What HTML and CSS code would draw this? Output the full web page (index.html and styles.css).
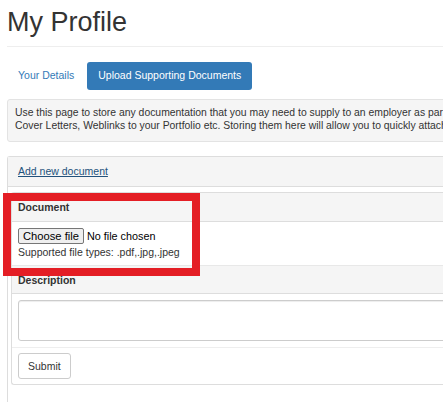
FILE: index.html
```html
<!DOCTYPE html>
<html>
<head>
<meta charset="utf-8">
<link rel="stylesheet" href="styles.css">
</head>
<body>
<div class="page">
  <div class="page-header"><h1>My Profile</h1></div>
  <ul class="nav">
    <li><a class="tab">Your Details</a></li>
    <li><a class="tab active">Upload Supporting Documents</a></li>
  </ul>
  <div class="well">Use this page to store any documentation that you may need to supply to an employer as part of an application, such as CVs,<br>Cover Letters, Weblinks to your Portfolio etc. Storing them here will allow you to quickly attach them to your applications.</div>
  <div class="panel outer">
    <div class="panel-heading"><a class="link" href="#">Add new document</a></div>
    <div class="outer-body">
      <div class="panel inner">
        <div class="panel-heading strong">Document</div>
        <div class="panel-body file-body">
          <div class="file-row"><span class="file-btn">Choose file</span><span class="file-none">No file chosen</span></div>
          <div class="hint">Supported file types: .pdf,.jpg,.jpeg</div>
        </div>
        <div class="panel-heading strong desc">Description</div>
        <div class="panel-body text-body">
          <div class="textarea"></div>
        </div>
        <div class="panel-footer"><span class="btn">Submit</span></div>
      </div>
    </div>
  </div>
  <div class="highlight"></div>
</div>
</body>
</html>
```
FILE: styles.css
```css
html, body {
  margin: 0;
  padding: 0;
  background: #fff;
  overflow: hidden;
}
body {
  font-family: "Liberation Sans", Arial, sans-serif;
  font-size: 10.5px;
  color: #333;
  width: 443px;
  height: 402px;
}
.page {
  position: relative;
  width: 720px;
  padding-left: 7px;
}
.page-header {
  padding-top: 8px;
  padding-bottom: 8px;
  border-bottom: 1px solid #eee;
}
h1 {
  margin: 0;
  font-size: 27px;
  font-weight: 500;
  line-height: 29.7px;
  color: #333;
}
.nav {
  list-style: none;
  margin: 15px 0 0 0;
  padding: 0 0 9px 0;
  display: flex;
  gap: 2px;
}
.tab {
  display: block;
  padding: 6.5px 11px;
  line-height: 15px;
  border-radius: 3px;
  color: #337ab7;
}
.tab.active {
  background: #337ab7;
  color: #fff;
}
.well {
  background: #f5f5f5;
  border: 1px solid #e3e3e3;
  border-radius: 3px;
  padding: 6px 7px 9px 7px;
  line-height: 13px;
  font-size: 10.4px;
  white-space: nowrap;
  overflow: hidden;
}
.panel {
  border: 1px solid #ddd;
  border-radius: 3px;
  background: #fff;
}
.outer {
  margin-top: 14px;
  height: 300px;
  border-right: none;
}
.panel-heading {
  background: #f5f5f5;
  border-bottom: 1px solid #ddd;
  padding: 7px 11px;
  line-height: 14px;
}
.outer > .panel-heading {
  padding: 7.5px 10px;
  line-height: 14px;
}
.link {
  color: #23527c;
  text-decoration: underline;
}
.outer-body {
  padding: 5px 0 0 3px;
}
.inner {
  border-right: none;
  border-radius: 3px 0 0 3px;
}
.strong {
  font-weight: bold;
  color: #333;
  padding: 7px 6px 7px 6px;
}
.desc {
  border-top: 1px solid #e8e8e8;
  padding: 7px 6px 6px 6px;
}
.panel-body {
  padding: 0 6px;
}
.file-body {
  padding-top: 6px;
  height: 37px;
}
.file-row {
  display: flex;
  align-items: center;
  gap: 3px;
  height: 16px;
}
.file-btn {
  display: inline-block;
  height: 14px;
  line-height: 14px;
  padding: 0 4px;
  border: 1px solid #767676;
  border-radius: 2px;
  background: #efefef;
  color: #000;
  font-size: 11.2px;
}
.file-none {
  color: #000;
  font-size: 10.8px;
}
.hint {
  margin-top: 2px;
  line-height: 13px;
  color: #333;
}
.text-body {
  padding-top: 6px;
  padding-bottom: 6px;
}
.textarea {
  height: 39px;
  border: 1px solid #ccc;
  border-radius: 3px;
  box-shadow: inset 0 1px 1px rgba(0,0,0,0.075);
}
.panel-footer {
  border-top: 1px solid #eee;
  padding: 5px 6px 5px 6px;
}
.btn {
  display: inline-block;
  padding: 5px 9px;
  line-height: 14px;
  border: 1px solid #ccc;
  border-radius: 3px;
  background: #fff;
  color: #333;
}
.highlight {
  position: absolute;
  left: 3px;
  top: 193px;
  width: 181px;
  height: 67px;
  border: 8px solid #e41e25;
  pointer-events: none;
}
```
